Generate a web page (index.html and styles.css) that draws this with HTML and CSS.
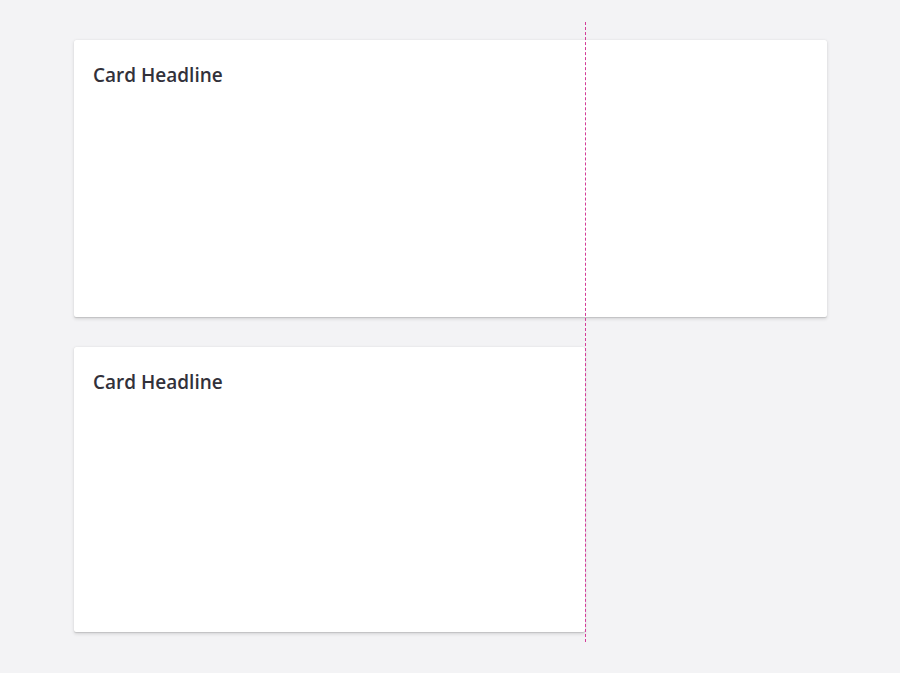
FILE: index.html
```html
<!DOCTYPE html>
<html lang="en">
<head>
<meta charset="utf-8">
<title>Cards</title>
<link rel="stylesheet" href="styles.css">
</head>
<body>
<div class="page">
  <div class="card card-wide">
    <h2 class="headline">Card Headline</h2>
  </div>
  <div class="card card-narrow">
    <h2 class="headline">Card Headline</h2>
  </div>
  <div class="guide"></div>
</div>
</body>
</html>
```

FILE: styles.css
```css
html, body {
  margin: 0;
  padding: 0;
  background: #f3f3f5;
  font-family: "Open Sans", "Noto Sans", sans-serif;
}
.page {
  position: relative;
  width: 900px;
  height: 673px;
  box-sizing: border-box;
  padding: 40px 73px 0 74px;
  display: flex;
  flex-direction: column;
  gap: 30px;
}
.card {
  background: #ffffff;
  border-radius: 2px;
  box-shadow: 0 1.6px 3.6px rgba(0,0,0,0.13), 0 0.3px 0.9px rgba(0,0,0,0.11);
  box-sizing: border-box;
  padding: 23px 19px;
}
.card-wide {
  height: 277px;
}
.card-narrow {
  width: 511px;
  height: 285px;
}
.headline {
  margin: 0;
  font-size: 19px;
  font-weight: 600;
  line-height: 24px;
  color: #32313a;
}
.guide {
  position: absolute;
  left: 585px;
  top: 22px;
  width: 0;
  height: 620px;
  border-left: 1px dashed #d43c98;
}
```
